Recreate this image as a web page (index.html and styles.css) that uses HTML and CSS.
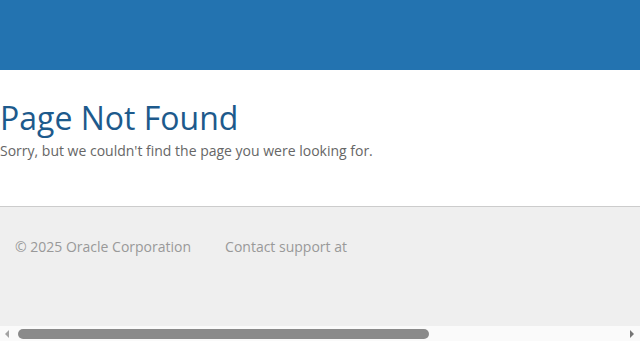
FILE: index.html
```html
<!DOCTYPE html>
<html>
<head>
<meta charset="utf-8">
<link rel="stylesheet" href="styles.css">
</head>
<body>
<div class="page">
  <header class="topbar"></header>
  <main class="content">
    <h1 class="title">Page Not Found</h1>
    <p class="message">Sorry, but we couldn't find the page you were looking for.</p>
  </main>
  <footer class="footer">
    <span class="copy">© 2025 Oracle Corporation</span>
    <span class="contact">Contact support at</span>
  </footer>
  <div class="hscroll">
    <svg class="arrow" width="6" height="8" viewBox="0 0 6 8"><path d="M5 0 L1 4 L5 8 Z" fill="#a3a3a3"/></svg>
    <div class="track"><div class="thumb"></div></div>
    <svg class="arrow" width="6" height="8" viewBox="0 0 6 8"><path d="M1 0 L5 4 L1 8 Z" fill="#757575"/></svg>
  </div>
</div>
</body>
</html>
```
FILE: styles.css
```css
html, body {
  margin: 0;
  padding: 0;
  height: 100%;
}
body {
  font-family: "Open Sans", "DejaVu Sans", sans-serif;
  background: #efefef;
  overflow: hidden;
}
.page {
  width: 100%;
  height: 100%;
  display: flex;
  flex-direction: column;
}
.topbar {
  height: 70px;
  flex: none;
  background: #2373b0;
}
.content {
  background: #ffffff;
  padding: 28px 0 45px 0;
  white-space: nowrap;
}
.title {
  margin: 0;
  font-size: 32px;
  font-weight: 400;
  line-height: 40px;
  color: #1d5a8c;
}
.message {
  margin: 3px 0 0 0;
  font-size: 14px;
  line-height: 20px;
  color: #666666;
}
.footer {
  flex: 1;
  border-top: 1px solid #cccccc;
  background: #efefef;
  padding: 30px 15px 0 15px;
  display: flex;
  gap: 34px;
  font-size: 14px;
  line-height: 20px;
  color: #999999;
  white-space: nowrap;
}
.hscroll {
  flex: none;
  height: 15px;
  background: #fafafa;
  display: flex;
  align-items: center;
  padding: 0 5px 0 4px;
  gap: 3px;
}
.arrow {
  flex: none;
}
.track {
  flex: 1;
  height: 10px;
  padding-left: 5px;
}
.thumb {
  width: 411px;
  height: 10px;
  border-radius: 5px;
  background: #8a8a8a;
}
```
